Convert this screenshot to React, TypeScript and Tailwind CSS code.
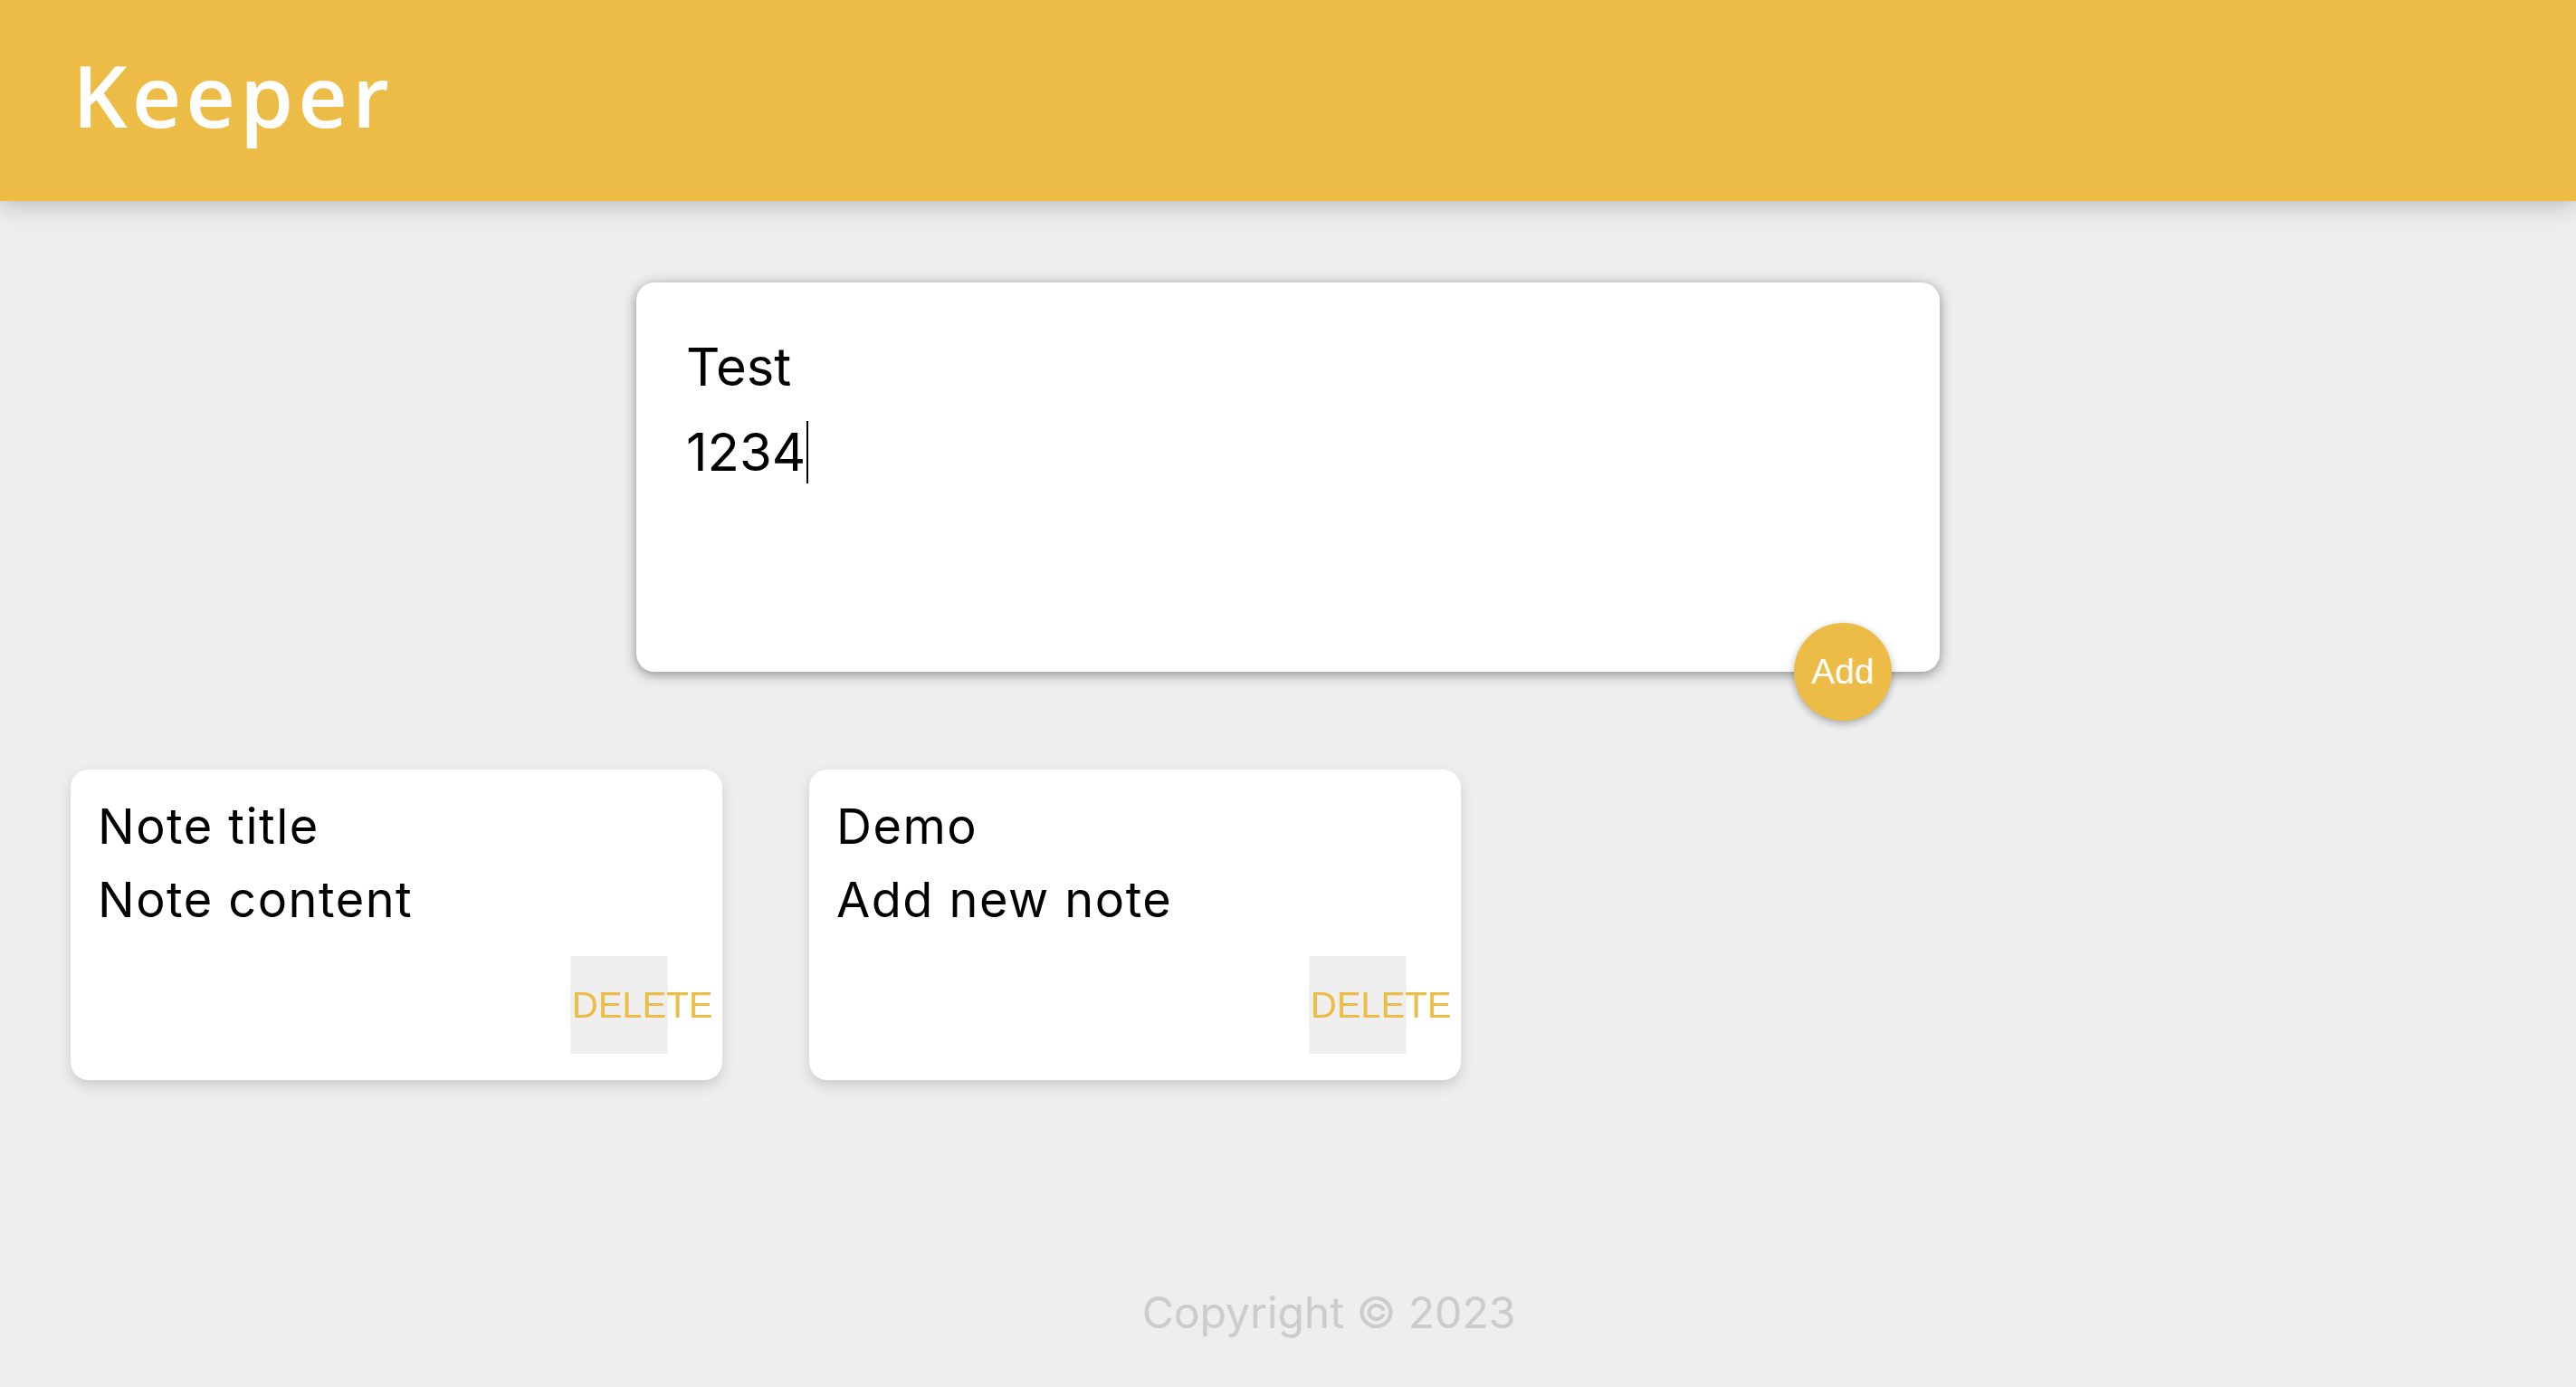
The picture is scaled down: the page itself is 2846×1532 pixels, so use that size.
const notes = [
  { title: "Note title", content: "Note content" },
  { title: "Demo", content: "Add new note" },
];

function Note({ title, content }: { title: string; content: string }) {
  return (
    <div className="flex h-[343px] w-[720px] flex-col rounded-[20px] bg-white px-[30px] pt-[22px] shadow-[0_6px_14px_#cccccc]">
      <h1 className="text-[54px] leading-[81px] font-normal tracking-[1.5px] text-black">{title}</h1>
      <p className="text-[54px] leading-[81px] tracking-[1.5px] text-black">{content}</p>
      <div className="mt-[22px] flex justify-end pr-[30px]">
        <button className="flex h-[108px] w-[108px] items-center justify-start overflow-visible bg-[#efefef] pl-[2px] font-['Liberation_Sans',Arial,sans-serif] text-[40px] leading-none whitespace-nowrap text-[#ecbc46]">
          DELETE
        </button>
      </div>
    </div>
  );
}

export default function App() {
  return (
    <div className="flex min-h-[1532px] flex-col bg-[#eeeeee] font-['Inter',sans-serif]">
      <header className="h-[222px] bg-[#ecbc46] pl-[80px] pt-[57px] shadow-[0_0_28px_rgba(0,0,0,0.3)]">
        <h1 className="font-['Open_Sans',sans-serif] text-[95px] leading-none font-semibold tracking-[5px] text-white">
          Keeper
        </h1>
      </header>

      <main className="flex-1">
        {/* create note */}
        <form className="relative mx-auto mt-[90px] flex h-[430px] w-[1440px] flex-col rounded-[20px] bg-white pl-[55px] pt-[46px] shadow-[0_3px_14px_rgb(138,137,137)]">
          <div className="text-[58px] leading-[94px] text-black">Test</div>
          <div className="flex items-center text-[58px] leading-[94px] text-black">
            1234
            <span className="ml-[1px] inline-block h-[69px] w-[2px] bg-black" />
          </div>
          <button
            type="button"
            className="absolute -bottom-[54px] right-[53px] flex h-[108px] w-[108px] items-center justify-center rounded-full bg-[#ecbc46] font-['Liberation_Sans',Arial,sans-serif] text-[39px] text-white shadow-[0_3px_8px_rgba(0,0,0,0.3)]"
          >
            Add
          </button>
        </form>

        <div className="mt-[108px] flex gap-[96px] pl-[78px]">
          {notes.map((n) => (
            <Note key={n.title} title={n.title} content={n.content} />
          ))}
        </div>
      </main>

      <footer className="pb-[46px] pl-[90px] text-center">
        <p className="text-[48px] leading-[72px] text-[#cccccc]">Copyright © 2023</p>
      </footer>
    </div>
  );
}
